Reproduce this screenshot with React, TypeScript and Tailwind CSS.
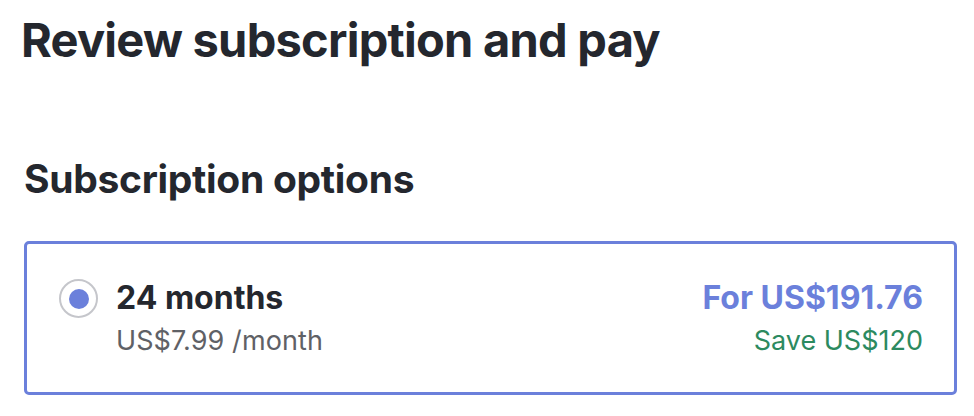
import React from 'react';

export default function App() {
  return (
    <div className="min-h-screen bg-white px-[24px] pt-[11px] text-[#24272e]" style={{ fontFamily: 'Inter, "Noto Sans", sans-serif' }}>
      <h1 className="text-[47px] font-bold leading-[58px] tracking-[-0.75px] -ml-[3px]">Review subscription and pay</h1>

      <h2 className="mt-[87px] text-[39px] font-bold leading-[46px] tracking-[-0.3px]">Subscription options</h2>

      <div className="mt-[39px] w-[933px] h-[154px] rounded-[5px] border-[3px] border-[#6b80db] flex items-start pl-[32px] pr-[31px] pt-[35px]">
        <div className="w-[39px] h-[39px] rounded-full border-2 border-[#c5c6cb] flex items-center justify-center shrink-0">
          <div className="w-[20px] h-[20px] rounded-full bg-[#6b80db]" />
        </div>
        <div className="ml-[18px] flex-1 -mt-[1px]">
          <div className="text-[32px] font-bold leading-[40px]">24 months</div>
          <div className="mt-[5px] text-[27px] leading-[36px] tracking-[0.1px] text-[#5f6166]">US$7.99 /month</div>
        </div>
        <div className="text-right -mt-[1px]">
          <div className="text-[32px] font-bold leading-[40px] text-[#6b80db]">For US$191.76</div>
          <div className="mt-[5px] text-[27px] leading-[36px] text-[#2c8a5f]">Save US$120</div>
        </div>
      </div>
    </div>
  );
}
